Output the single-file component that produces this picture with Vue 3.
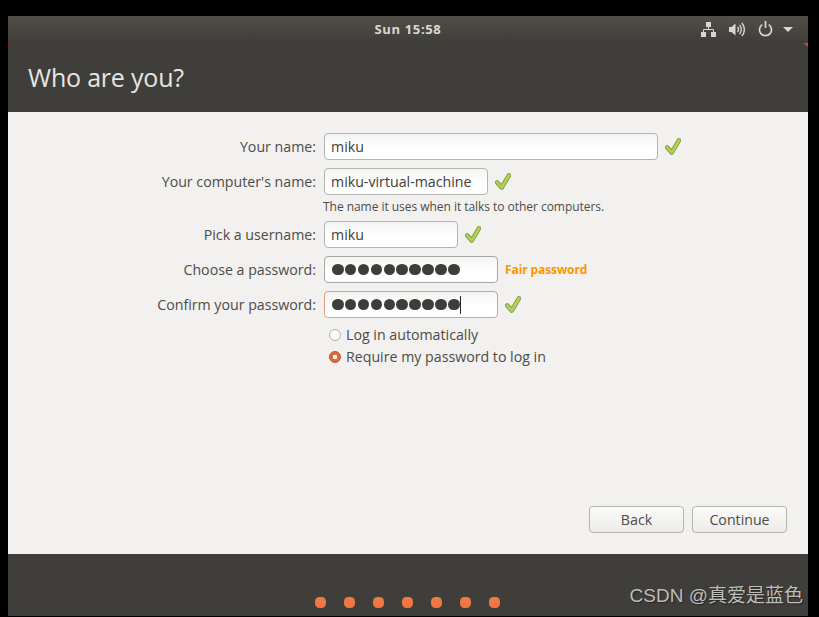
<script setup>
const dots = Array.from({ length: 7 })
const pw = Array.from({ length: 10 })
</script>

<template>
  <div class="screen">
    <div class="window">
      <header class="head">
        <span class="nick left"></span>
        <span class="nick right"></span>
        <div class="panel">
          <span class="clock">Sun 15:58</span>
          <div class="tray">
            <svg class="i-net" width="15" height="15" viewBox="0 0 15 15" fill="#d6d6d3">
              <rect x="5" y="0" width="5" height="5" />
              <rect x="0" y="10" width="5" height="5" />
              <rect x="10" y="10" width="5" height="5" />
              <path d="M7.500 5v3M2.500 10V7.500h10V10" fill="none" stroke="#d6d6d3" />
            </svg>
            <svg class="i-vol" width="16" height="15" viewBox="0 0 16 15" fill="none" stroke="#d6d6d3">
              <path d="M0 5h2.500L6.500 1.500v12L2.500 10H0z" fill="#d6d6d3" stroke="none" />
              <path d="M8.500 5a3.500 3.500 0 0 1 0 5" stroke-width="1.400" />
              <path d="M10.500 3a6.500 6.500 0 0 1 0 9" stroke-width="1.400" />
              <path d="M12.800 1a9.500 9.500 0 0 1 0 13" stroke-width="1.400" />
            </svg>
            <svg class="i-pow" width="15" height="16" viewBox="0 0 15 16" fill="none" stroke="#d6d6d3" stroke-width="1.700">
              <path d="M4.300 3.600a6 6 0 1 0 6.400 0" />
              <path d="M7.500 0v7" />
            </svg>
            <svg class="i-arr" width="10" height="5" viewBox="0 0 10 5"><path d="M0 0h10L5 5z" fill="#d6d6d3" /></svg>
          </div>
        </div>
        <h1 class="title">Who are you?</h1>
      </header>

      <main class="body">
        <form class="form">
          <div class="row">
            <label class="lab">Your name:</label>
            <div class="field w-name">miku</div>
            <svg class="check" width="16" height="17" viewBox="0 0 16 17" fill="none" stroke-linecap="round" stroke-linejoin="round"><path d="M2.200 9.500 6.700 14.500 14 2.400" stroke="#83a33a" stroke-width="4.600" /><path d="M2.200 9.500 6.700 14.500 14 2.400" stroke="#b7d05c" stroke-width="2.600" /></svg>
          </div>
          <div class="row">
            <label class="lab">Your computer's name:</label>
            <div class="field w-comp">miku-virtual-machine</div>
            <svg class="check" width="16" height="17" viewBox="0 0 16 17" fill="none" stroke-linecap="round" stroke-linejoin="round"><path d="M2.200 9.500 6.700 14.500 14 2.400" stroke="#83a33a" stroke-width="4.600" /><path d="M2.200 9.500 6.700 14.500 14 2.400" stroke="#b7d05c" stroke-width="2.600" /></svg>
          </div>
          <p class="hint">The name it uses when it talks to other computers.</p>
          <div class="row">
            <label class="lab">Pick a username:</label>
            <div class="field w-user">miku</div>
            <svg class="check" width="16" height="17" viewBox="0 0 16 17" fill="none" stroke-linecap="round" stroke-linejoin="round"><path d="M2.200 9.500 6.700 14.500 14 2.400" stroke="#83a33a" stroke-width="4.600" /><path d="M2.200 9.500 6.700 14.500 14 2.400" stroke="#b7d05c" stroke-width="2.600" /></svg>
          </div>
          <div class="row">
            <label class="lab">Choose a password:</label>
            <div class="field w-pass dark-border">
              <span class="pdots"><i v-for="(_, n) in pw" :key="n" class="pdot"></i></span>
            </div>
            <span class="fair">Fair password</span>
          </div>
          <div class="row">
            <label class="lab">Confirm your password:</label>
            <div class="field w-pass focus">
              <span class="pdots"><i v-for="(_, n) in pw" :key="n" class="pdot"></i></span>
              <span class="caret"></span>
            </div>
            <svg class="check" width="16" height="17" viewBox="0 0 16 17" fill="none" stroke-linecap="round" stroke-linejoin="round"><path d="M2.200 9.500 6.700 14.500 14 2.400" stroke="#83a33a" stroke-width="4.600" /><path d="M2.200 9.500 6.700 14.500 14 2.400" stroke="#b7d05c" stroke-width="2.600" /></svg>
          </div>
          <div class="radios">
            <div class="radio"><span class="rb"></span><span>Log in automatically</span></div>
            <div class="radio"><span class="rb on"></span><span>Require my password to log in</span></div>
          </div>
        </form>
        <div class="actions">
          <button type="button" class="btn">Back</button>
          <button type="button" class="btn">Continue</button>
        </div>
      </main>

      <footer class="foot">
        <span v-for="(_, n) in dots" :key="n" class="dot"></span>
      </footer>
    </div>
    <span class="mark">CSDN @真爱是蓝色</span>
  </div>
</template>

<style>
html, body { margin: 0; background: #000; }
</style>

<style scoped>
.screen {
  position: relative;
  width: 819px;
  height: 617px;
  overflow: hidden;
  background: #000;
  padding: 16px 11px 1px 8px;
  box-sizing: border-box;
  font-family: "Open Sans", "Noto Sans", sans-serif;
  color: #4c4c48;
}
.window {
  height: 600px;
  display: flex;
  flex-direction: column;
  background: #f2f1ef;
}
.head {
  position: relative;
  height: 96px;
  flex: none;
  background: linear-gradient(#524f47 0, #403e3a 26px, #403e3a 100%);
  box-sizing: border-box;
}
.nick {
  position: absolute;
  top: 27px;
  width: 0;
  height: 0;
  border-top: 4px solid #7a2238;
}
.nick.left { left: 0; border-right: 4px solid transparent; }
.nick.right { right: 0; border-top-color: #d8461f; border-left: 5px solid transparent; }
.panel {
  height: 26px;
  position: relative;
  display: flex;
  align-items: center;
  justify-content: center;
}
.clock {
  color: #d8d8d5;
  font-size: 13px;
  font-weight: 700;
  letter-spacing: 0.650px;
}
.tray {
  position: absolute;
  right: 15px;
  top: 5px;
  display: flex;
  align-items: center;
  gap: 13px;
}
.i-arr { margin-left: -3px; }
.title {
  margin: 20px 0 0 20px;
  font-size: 25px;
  line-height: 30px;
  font-weight: 400;
  color: #e6e6e3;
  letter-spacing: -0.200px;
}
.body {
  flex: 1;
  display: flex;
  flex-direction: column;
  justify-content: space-between;
  padding: 21px 21px 21px 0;
  font-size: 14.200px;
}
.form {
  display: flex;
  flex-direction: column;
  gap: 8px;
}
.row {
  display: flex;
  align-items: center;
  height: 27px;
}
.lab {
  width: 308px;
  flex: none;
  margin-right: 8px;
  text-align: right;
}
.field {
  height: 27px;
  box-sizing: border-box;
  border: 1px solid #b6b4b0;
  border-radius: 4px;
  background: linear-gradient(#f3f3f2, #ffffff 14px);
  padding: 0 6px;
  display: flex;
  align-items: center;
  line-height: 25px;
  color: #3d3d3a;
}
.w-name { width: 334px; }
.w-comp { width: 164px; }
.w-user { width: 134px; }
.w-pass { width: 174px; }
.dark-border { border-color: #a9a7a3; }
.focus { border-color: #e79b7f; }
.check { margin-left: 7px; flex: none; }
.hint {
  margin: -5px 0 -3px 315px;
  height: 18px;
  line-height: 18px;
  font-size: 12px;
  letter-spacing: -0.040px;
}
.pdots { display: flex; gap: 1.400px; margin-left: 1px; }
.pdot {
  display: block;
  width: 11.500px;
  height: 11.500px;
  border-radius: 50%;
  background: #3d3d3a;
}
.caret {
  width: 1px;
  height: 18px;
  background: #222;
}
.fair {
  margin-left: 7px;
  color: #ff9500;
  font-size: 12px;
  font-weight: 700;
  letter-spacing: -0.100px;
}
.radios {
  margin-top: -1px;
  margin-left: 321px;
  display: flex;
  flex-direction: column;
  gap: 3px;
}
.radio {
  height: 19px;
  display: flex;
  align-items: center;
  gap: 5px;
}
.rb {
  width: 12px;
  height: 12px;
  box-sizing: border-box;
  border: 1px solid #b0aeaa;
  border-radius: 50%;
  background: #fbfbfa;
  flex: none;
}
.rb.on {
  border-color: #c2562d;
  background: radial-gradient(circle, #fff 0 2px, #e0693a 2.600px);
}
.actions {
  display: flex;
  justify-content: flex-end;
  gap: 8px;
}
.btn {
  width: 95px;
  height: 27px;
  padding: 0;
  border: 1px solid #b6b4b0;
  border-radius: 4px;
  background: linear-gradient(#fbfbfa, #ecebe9);
  font: inherit;
  color: #4c4c48;
}
.foot {
  height: 62px;
  flex: none;
  box-sizing: border-box;
  background: #403e3a;
  display: flex;
  justify-content: center;
  gap: 18px;
  padding: 43px 2px 8px 0;
}
.dot {
  width: 11px;
  height: 11px;
  border-radius: 4.500px;
  background: linear-gradient(#f17b47, #ef7240);
}
.mark {
  position: absolute;
  right: 16px;
  top: 585px;
  font-family: "Liberation Sans", "Noto Sans CJK SC", sans-serif;
  font-size: 19px;
  line-height: 22px;
  color: #bdbdba;
  text-shadow: 1px 1px 1px #222;
}
</style>
